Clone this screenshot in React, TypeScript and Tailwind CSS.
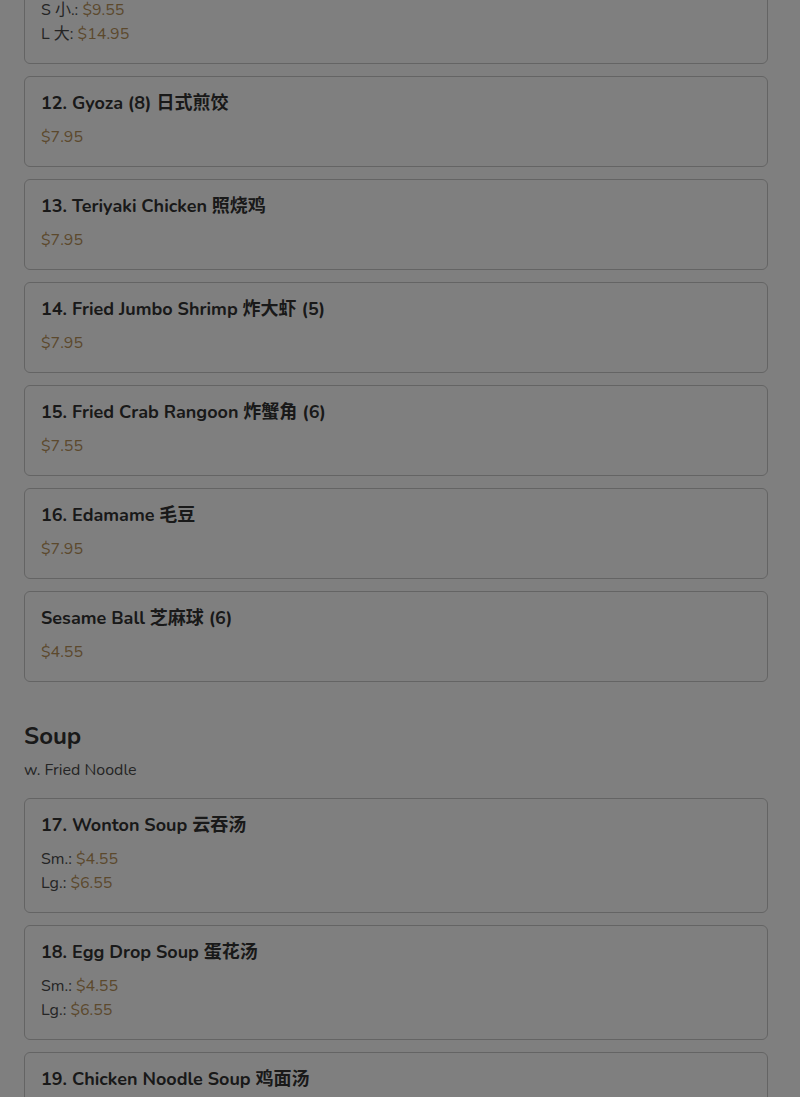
import React from "react";

type Item = {
  name: string;
  prices: { label?: string; value: string }[];
};

const appetizers: Item[] = [
  { name: "11. Chicken Wings 炸鸡翅", prices: [{ label: "S 小.:", value: "$9.55" }, { label: "L 大:", value: "$14.95" }] },
  { name: "12. Gyoza (8) 日式煎饺", prices: [{ value: "$7.95" }] },
  { name: "13. Teriyaki Chicken 照烧鸡", prices: [{ value: "$7.95" }] },
  { name: "14. Fried Jumbo Shrimp 炸大虾 (5)", prices: [{ value: "$7.95" }] },
  { name: "15. Fried Crab Rangoon 炸蟹角 (6)", prices: [{ value: "$7.55" }] },
  { name: "16. Edamame 毛豆", prices: [{ value: "$7.95" }] },
  { name: "Sesame Ball 芝麻球 (6)", prices: [{ value: "$4.55" }] },
];

const soups: Item[] = [
  { name: "17. Wonton Soup 云吞汤", prices: [{ label: "Sm.:", value: "$4.55" }, { label: "Lg.:", value: "$6.55" }] },
  { name: "18. Egg Drop Soup 蛋花汤", prices: [{ label: "Sm.:", value: "$4.55" }, { label: "Lg.:", value: "$6.55" }] },
  { name: "19. Chicken Noodle Soup 鸡面汤", prices: [{ label: "Sm.:", value: "$4.55" }, { label: "Lg.:", value: "$6.55" }] },
];

const MenuCard = ({ item }: { item: Item }) => (
  <div className="border border-[#c8c8c8] rounded-md px-4 pt-[14px] pb-[17px] mb-3 bg-white">
    <h3 className="text-[18px] leading-6 font-bold text-[#333] mb-2.5">{item.name}</h3>
    {item.prices.map((p, i) => (
      <div key={i} className="text-[16px] leading-6 text-[#4a4a4a]">
        {p.label && <span>{p.label} </span>}
        <span className="text-[#b8925a]">{p.value}</span>
      </div>
    ))}
  </div>
);

export default function App() {
  return (
    <div className="relative min-h-screen bg-white overflow-hidden font-['Nunito','Lato','Noto_Sans_CJK_SC',sans-serif]">
      <div className="pl-6 pr-8 -mt-[51px]">
        {appetizers.map((item) => (
          <MenuCard key={item.name} item={item} />
        ))}

        <section className="mt-[38px]">
          <h2 className="text-[24px] leading-8 font-bold text-[#333]">Soup</h2>
          <p className="text-[16px] leading-6 text-[#4a4a4a] mt-1.5 mb-4">w. Fried Noodle</p>
          {soups.map((item) => (
            <MenuCard key={item.name} item={item} />
          ))}
        </section>
      </div>

      {/* modal backdrop */}
      <div className="fixed inset-0 bg-black/50"></div>
    </div>
  );
}
